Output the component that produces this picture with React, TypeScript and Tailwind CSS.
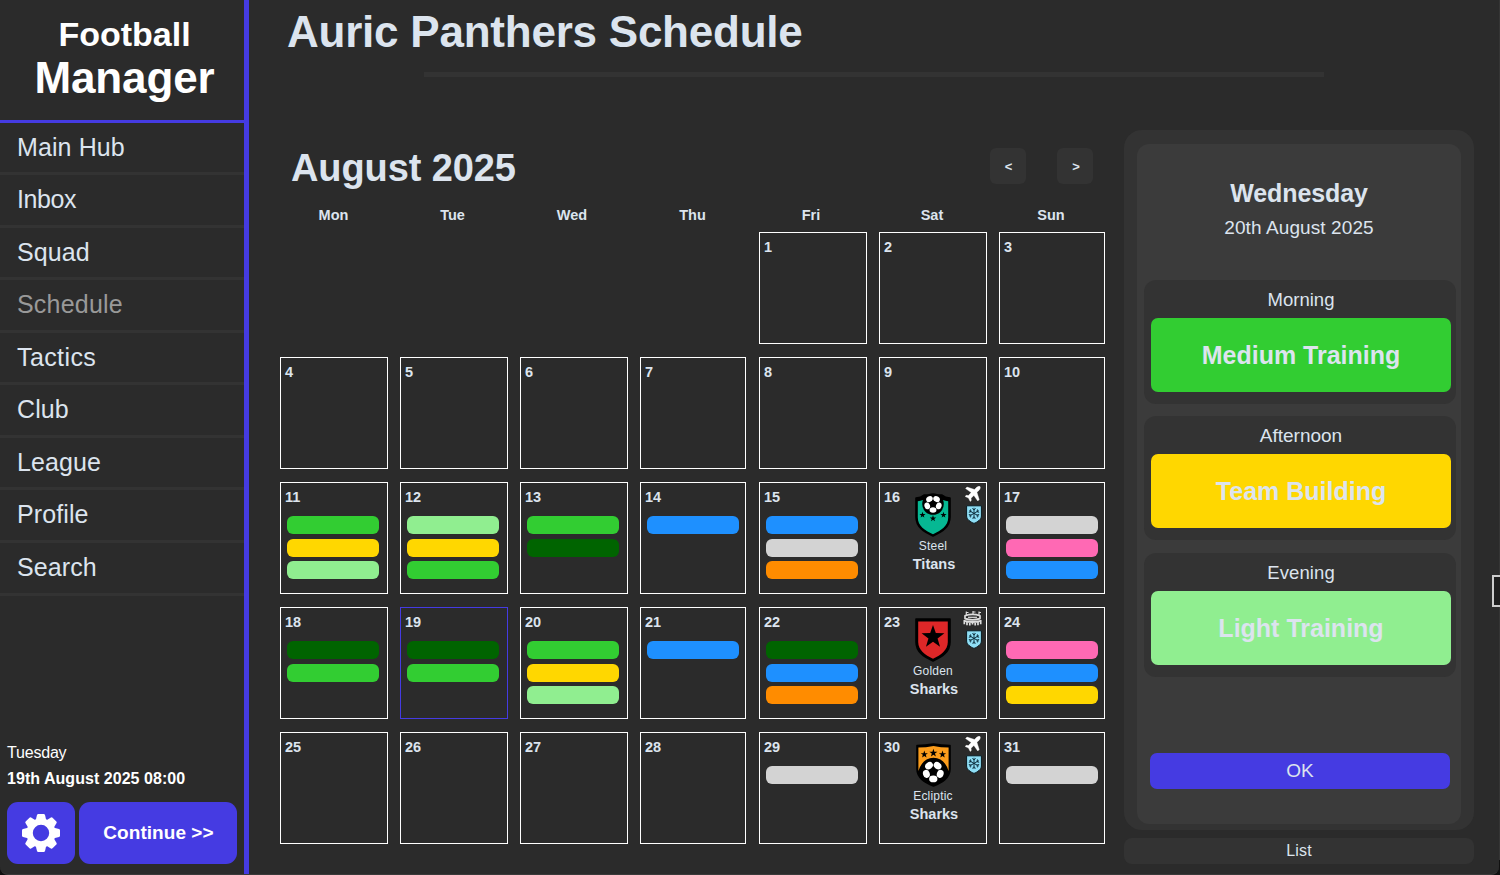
import React from "react";

type Match = { first: string; last: string; crest: "titans" | "golden" | "ecliptic"; away: boolean };
type Day = { n: number; bars?: string[]; match?: Match; today?: boolean };

const M = "bg-[#32cd32]";
const Y = "bg-[#ffd700]";
const L = "bg-[#90ee90]";
const D = "bg-[#006400]";
const B = "bg-[#1e90ff]";
const G = "bg-[#d3d3d3]";
const P = "bg-[#ff69b4]";
const O = "bg-[#ff8c00]";

const events: Record<number, Omit<Day, "n">> = {
  11: { bars: [M, Y, L] },
  12: { bars: [L, Y, M] },
  13: { bars: [M, D] },
  14: { bars: [B] },
  15: { bars: [B, G, O] },
  16: { match: { first: "Steel", last: "Titans", crest: "titans", away: true } },
  17: { bars: [G, P, B] },
  18: { bars: [D, M] },
  19: { bars: [D, M], today: true },
  20: { bars: [M, Y, L] },
  21: { bars: [B] },
  22: { bars: [D, B, O] },
  23: { match: { first: "Golden", last: "Sharks", crest: "golden", away: false } },
  24: { bars: [P, B, Y] },
  29: { bars: [G] },
  30: { match: { first: "Ecliptic", last: "Sharks", crest: "ecliptic", away: true } },
  31: { bars: [G] },
};

const nav = [
  { label: "Main Hub", style: "h-[49px] tracking-[0.1px]" },
  { label: "Inbox", style: "h-[50px] tracking-[-0.4px]" },
  { label: "Squad", style: "h-[49px] tracking-[0.1px]" },
  { label: "Schedule", style: "h-[50px] tracking-[0.2px] text-[#999999]" },
  { label: "Tactics", style: "h-[49px] tracking-[0.4px]" },
  { label: "Club", style: "h-[50px] tracking-[0.1px]" },
  { label: "League", style: "h-[49px] tracking-[0.1px]" },
  { label: "Profile", style: "h-[50px] tracking-[0.1px]" },
  { label: "Search", style: "h-[50px] tracking-[0.1px]" },
];

const STAR = "0,-1 0.235,-0.324 0.951,-0.309 0.38,0.124 0.588,0.809 0,0.4 -0.588,0.809 -0.38,0.124 -0.951,-0.309 -0.235,-0.324";

function Star({ x, y, r }: { x: number; y: number; r: number }) {
  return <polygon points={STAR} transform={`translate(${x} ${y}) scale(${r})`} fill="#000" />;
}

function Ball({ x, y, r }: { x: number; y: number; r: number }) {
  return (
    <g transform={`translate(${x} ${y}) scale(${r / 10})`}>
      <circle r="11.6" fill="#000" />
      {[36, 108, 180, 252, 324].map((a) => (
        <ellipse key={a} transform={`rotate(${a})`} cx="0" cy="-6.5" rx="3.7" ry="3" fill="#fff" />
      ))}
    </g>
  );
}

function Crest({ kind }: { kind: Match["crest"] }) {
  return (
    <svg width="36" height="44" viewBox="0 0 36 44">
      {kind === "titans" && (
        <>
          <path d="M1 5Q6 4.5 9 2L27 2Q30 4.5 35 5V24C35 34 27 39 18 43C9 39 1 34 1 24Z" fill="#000" stroke="#000" strokeWidth="1.6" strokeLinejoin="round" />
          <path d="M2.8 8.2Q5.5 8 8 7A11 11 0 0 0 28 7Q30.5 8 33.2 8.2V24.5C33.2 33 26 37.6 18 41.2C10 37.6 2.8 33 2.8 24.5Z" fill="#06b893" />
          <Ball x={18} y={11} r={9.3} />
          <Star x={7.5} y={22} r={3.2} />
          <Star x={18} y={25.5} r={3.4} />
          <Star x={28.5} y={22} r={3.2} />
        </>
      )}
      {kind === "golden" && (
        <>
          <path d="M1 1H35V24C35 34 27 39 18 43C9 39 1 34 1 24Z" fill="#000" stroke="#000" strokeWidth="1.6" strokeLinejoin="round" />
          <path d="M3.2 3.6H32.8V24C32.8 32 26 37 18 40.8C10 37 3.2 32 3.2 24Z" fill="#de2728" />
          <Star x={18} y={19} r={12} />
        </>
      )}
      {kind === "ecliptic" && (
        <>
          <path d="M2 2.5Q10 2.5 18.5 1Q27 2.5 35 2.5V26C35 35 27 39.5 18.5 43C10 39.5 2 35 2 26Z" fill="#000" stroke="#000" strokeWidth="1.6" strokeLinejoin="round" />
          <path d="M3.4 4.6Q11 4.6 18.5 3Q26 4.6 33.6 4.6V28Q32.5 24 30.5 21.5A14 14 0 0 0 6.5 21.5Q4.5 24 3.4 28Z" fill="#fc9d1c" />
          <Ball x={18.3} y={28.6} r={11.2} />
          <Star x={9.3} y={11.4} r={3.8} />
          <Star x={18.4} y={10} r={4.2} />
          <Star x={27.5} y={11.4} r={3.8} />
        </>
      )}
    </svg>
  );
}

function Plane() {
  return (
    <svg width="16" height="16" viewBox="0 0 16 16" fill="#fff">
      <path d="M15 .5C14 0 12.4.6 11.2 1.8L9.5 3.5L2 1.1L.6 2.5L6.2 6.6L3.4 9.6L1.2 9.3L.1 10.4L3.5 12.1L5.2 15.4L6.3 14.4L6 12.2L8.9 9.4L12.8 15L14.2 13.6L11.9 6.2L13.9 4.4C15.2 3.1 15.7 1.5 15 .5Z" stroke="#fff" strokeWidth=".4" />
    </svg>
  );
}

function Stadium() {
  return (
    <svg width="19" height="16" viewBox="0 0 19 16" fill="none" stroke="#dddddd">
      <path d="M3.3 .5V4M3.3 1.5H5.5M10 0V3M10 1H12.5M16 .5V4M16 1.5H18" strokeWidth="1.2" />
      <path d="M2 4.8Q9.5 2 17 4.8V7.6Q9.5 10 2 7.6Z" strokeWidth="1.7" strokeLinejoin="round" />
      <path d="M5 6.3H14" strokeWidth="1.2" />
      <path d="M1.2 9.8Q9.5 12.2 17.8 9.8" strokeWidth="1.8" />
      <path d="M1.3 9V13.2M4 11V14.3M6.8 12V14.4M9.5 12V13.6M12.2 12V14.4M15 11V14.3M17.7 9V13.2" strokeWidth="1.7" />
    </svg>
  );
}

function FrostShield() {
  return (
    <svg width="16" height="19" viewBox="0 0 16 19">
      <path d="M.6 .8H15.4V11C15.4 14.5 11.5 17 8 18.4C4.5 17 .6 14.5 .6 11Z" fill="#8fdff6" stroke="#0b1a20" strokeWidth="1" />
      <g transform="translate(8 8.4)" stroke="#0c2c3a" strokeWidth="0.9" fill="none">
        {[0, 60, 120, 180, 240, 300].map((a) => (
          <path key={a} transform={`rotate(${a})`} d="M0 0V-5.6M-1.7 -5L0 -3.4L1.7 -5" />
        ))}
      </g>
    </svg>
  );
}

function Gear() {
  const teeth = [0, 45, 90, 135, 180, 225, 270, 315];
  return (
    <svg width="38" height="38" viewBox="-19 -19 38 38">
      <circle r="11.4" fill="none" stroke="#fff" strokeWidth="6.4" />
      {teeth.map((a) => (
        <path key={a} transform={`rotate(${a})`} d="M-5.2 -13L-4 -18Q-3.7 -19 -2.7 -19H2.7Q3.7 -19 4 -18L5.2 -13Z" fill="#fff" />
      ))}
    </svg>
  );
}

function DayCell({ day, narrow }: { day: Day; narrow: boolean }) {
  return (
    <div className={`relative flex h-[112px] flex-col border ${narrow ? "w-[106px]" : "w-[108px]"} ${day.today ? "border-[#453be2]" : "border-white"}`}>
      <span className="ml-1 mt-[5px] h-[18px] text-[14.5px] font-bold leading-[18px]">{day.n}</span>
      {day.bars && (
        <div className="ml-[6px] mt-[10px] flex flex-col">
          {day.bars.map((c, i) => (
            <div key={i} className={`h-[18px] w-[92px] rounded-[6px] ${i === 0 ? "mb-[5px]" : "mb-1"} ${c}`} />
          ))}
        </div>
      )}
      {day.match && (
        <>
          <div className="absolute left-[35px] top-[10px]"><Crest kind={day.match.crest} /></div>
          <div className={`absolute top-[3px] ${day.match.away ? "left-[85px]" : "left-[83px]"}`}>{day.match.away ? <Plane /> : <Stadium />}</div>
          <div className="absolute left-[86px] top-[22px]"><FrostShield /></div>
          <div className="mt-[32px] text-center text-[12px] leading-[17px] tracking-[0.2px]">{day.match.first}</div>
          <div className="ml-[2px] text-center text-[14.5px] font-bold leading-[18px]">{day.match.last}</div>
        </>
      )}
    </div>
  );
}

function Session({ title, label, color, className, titleClass }: { title: string; label: string; color: string; className: string; titleClass: string }) {
  return (
    <div className={`ml-[7px] flex w-[312px] flex-col rounded-[12px] bg-[#333333] pl-[7px] ${className}`}>
      <div className={`h-[38px] w-[300px] text-center leading-[39px] ${titleClass}`}>{title}</div>
      <div className={`flex h-[74px] w-[300px] items-center justify-center rounded-[7px] pt-[2px] text-[25px] font-bold ${color}`}>{label}</div>
    </div>
  );
}

export default function App() {
  const weekdays = ["Mon", "Tue", "Wed", "Thu", "Fri", "Sat", "Sun"];
  const cells: (Day | null)[] = [null, null, null, null];
  for (let n = 1; n <= 31; n++) cells.push({ n, ...events[n] });

  return (
    <div className="relative h-[875px] w-[1500px] overflow-hidden bg-[#111111] font-['Liberation_Sans',Arial,sans-serif] text-[#dce4ee]">
      <div className="flex h-[875px] w-[1499px] overflow-hidden rounded-b-[8px] border-b border-[#3a3a3a] bg-[#2b2b2b]">
        <aside className="flex w-[249px] shrink-0 flex-col border-r-[5px] border-[#453be2]">
          <div className="flex h-[123px] flex-col items-center border-b-[3px] border-[#453be2] pt-[13px] font-bold text-white">
            <div className="ml-[5px] text-[34px] leading-[42px]">Football</div>
            <div className="ml-[5px] text-[44px] leading-[46px] tracking-[-0.15px]">Manager</div>
          </div>
          <nav>
            {nav.map((item) => (
              <div key={item.label} className="border-b-[3px] border-[#333333]">
                <div className={`flex items-center pl-[17px] text-[25px] ${item.style}`}>{item.label}</div>
              </div>
            ))}
          </nav>
          <div className="mt-auto flex flex-col pb-[10px] pl-[7px] text-white">
            <div className="h-[26px] text-[16px] leading-[26px] tracking-[-0.2px]">Tuesday</div>
            <div className="h-[36px] text-[16px] font-bold leading-[26px] tracking-[0.04px]">19th August 2025 08:00</div>
            <div className="flex gap-1">
              <button className="flex h-[62px] w-[68px] items-center justify-center rounded-[11px] bg-[#453be2]"><Gear /></button>
              <button className="h-[62px] w-[158px] rounded-[11px] bg-[#453be2] pl-px text-[19px] font-bold tracking-[0.05px]">Continue &gt;&gt;</button>
            </div>
          </div>
        </aside>

        <main className="flex w-[1250px] flex-col">
          <header className="flex h-[130px] flex-col">
            <h1 className="ml-[38px] h-[72px] whitespace-nowrap pt-[6px] text-[44px] font-bold leading-[52px] tracking-[-0.23px]">Auric Panthers Schedule</h1>
            <div className="ml-[175px] h-[5px] w-[900px] bg-[#333333]" />
          </header>
          <div className="flex">
            <section className="ml-[31px] flex w-[844px] flex-col">
              <div className="flex h-[72px] pt-[18px]">
                <h2 className="ml-[11px] w-[699px] text-[38px] font-bold leading-[40px] tracking-[-0.1px]">August 2025</h2>
                <button className="mr-[31px] h-9 w-9 rounded-[6px] bg-[#333333] pl-px pt-px text-[13px] font-bold">&lt;</button>
                <button className="h-9 w-9 rounded-[6px] bg-[#333333] pl-[2px] pt-px text-[13px] font-bold">&gt;</button>
              </div>
              <div className="grid h-[30px] grid-cols-[107px_131px_108px_133px_104px_138px_100px] text-center text-[14.5px] font-bold leading-[26px]">
                {weekdays.map((d) => <div key={d}>{d}</div>)}
              </div>
              <div className="grid grid-cols-[120px_120px_120px_119px_120px_120px_106px] gap-y-[13px]">
                {cells.map((c, i) => (c ? <DayCell key={i} day={c} narrow={i % 7 === 3 || i % 7 === 6} /> : <div key={i} />))}
              </div>
            </section>

            <aside className="flex w-[350px] flex-col gap-2">
              <div className="h-[700px] rounded-[18px] bg-[#333333] pl-[13px] pt-[14px]">
                <div className="flex h-[680px] w-[324px] flex-col rounded-[12px] bg-[#3b3b3b]">
                  <div className="mt-[34px] text-center text-[25px] font-bold leading-[30px] tracking-[-0.1px]">Wednesday</div>
                  <div className="mt-[7px] text-center text-[19px] leading-[26px] tracking-[0.1px]">20th August 2025</div>
                  <Session title="Morning" label="Medium Training" color={M} className="mt-[39px] h-[124px]" titleClass="text-[18.5px]" />
                  <Session title="Afternoon" label="Team Building" color={Y} className="mt-3 h-[124px]" titleClass="text-[19px]" />
                  <Session title="Evening" label="Light Training" color={L} className="mt-[13px] h-[124px]" titleClass="text-[18.5px] tracking-[0.1px]" />
                  <button className="ml-[13px] mt-[76px] h-9 w-[300px] rounded-[7px] bg-[#453be2] text-[19px]">OK</button>
                </div>
              </div>
              <button className="h-[26px] rounded-[8px] bg-[#333333] text-[16px] tracking-[0.2px]">List</button>
            </aside>
          </div>
        </main>
      </div>
      <div className="absolute right-0 top-0 h-[860px] w-px bg-[#353535]" />
      <div className="absolute left-[1492px] top-[575px] h-8 w-3 border-2 border-[#cccccc] bg-[#1e1e1e]" />
    </div>
  );
}
